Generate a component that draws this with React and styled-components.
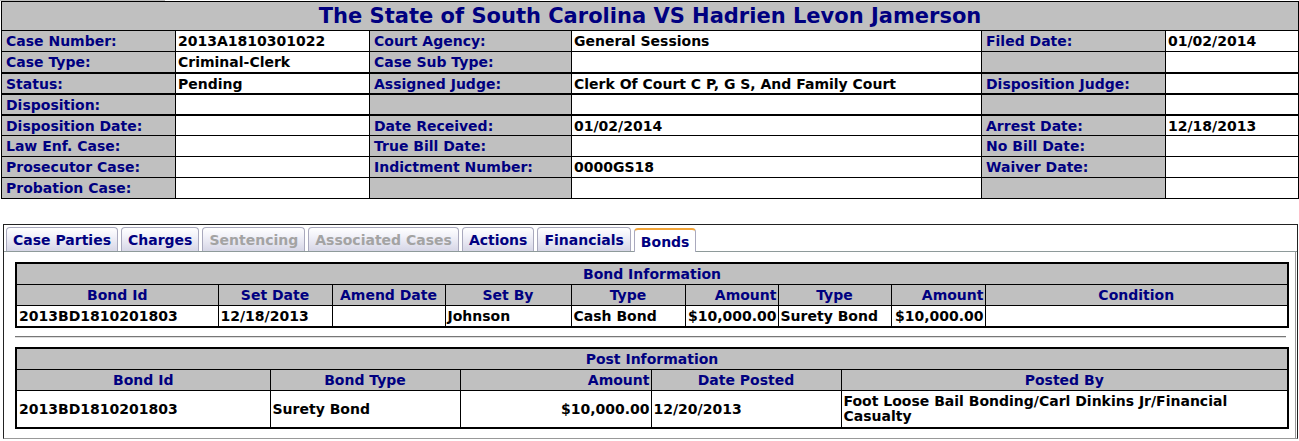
import React from 'react';
import styled, { createGlobalStyle } from 'styled-components';

const GlobalStyle = createGlobalStyle`
  body {
    margin: 0;
    background: #fff;
    font-family: Verdana, "DejaVu Sans", sans-serif;
    font-weight: bold;
  }
`;

const Page = styled.div`
  width: 1299px;
`;

const TopStrip = styled.div`
  width: 165px;
  height: 1px;
  background: #c0c0c0;
`;

const CaseTable = styled.table`
  border-collapse: collapse;
  table-layout: fixed;
  width: 1297px;
  margin-left: 1px;
  border: 1px solid #000;
`;

const Title = styled.th`
  height: 28px;
  padding: 0;
  background: #c0c0c0;
  color: #000080;
  font-size: 21px;
  text-align: center;
  border: 1px solid #000;
`;

const Row = styled.tr`
  & > td {
    border-top: ${(p) => (p.$thick ? '2px' : '1px')} solid #000;
    height: ${(p) => (p.$thick ? '19px' : '20px')};
  }
`;

const Label = styled.td`
  padding: 0 3px 0 4px;
  background: #c0c0c0;
  color: #000080;
  font-size: 14px;
  line-height: 16px;
  white-space: nowrap;
  overflow: hidden;
  border: 1px solid #000;
`;

const Value = styled(Label)`
  padding: 0 3px 0 2px;
  background: #fff;
  color: #000;
`;

const Panel = styled.div`
  margin: 25px 0 0 3px;
  width: 1293px;
  border: 1px solid #222;
  border-bottom-color: #999;
  padding: 1px 0 0;
`;

const TabBar = styled.div`
  display: flex;
  gap: 3px;
  padding-left: 2px;
  border-bottom: 1px solid #8e9a9a;
  height: 25px;
  align-items: flex-end;
`;

const Tab = styled.div`
  height: 24px;
  line-height: 25px;
  box-sizing: border-box;
  padding: 0 6px;
  margin-bottom: ${(p) => (p.$active ? '-1px' : '0')};
  font-size: 14px;
  color: ${(p) => (p.$disabled ? '#a3a3a3' : '#000080')};
  border: 1px solid #a9a9bd;
  border-bottom: none;
  border-top: ${(p) => (p.$active ? '2px solid #f2a437' : '1px solid #a9a9bd')};
  border-radius: 4px 4px 0 0;
  background: ${(p) =>
    p.$active ? '#fff' : 'linear-gradient(#ffffff 0%, #f0f0f8 40%, #d6d6e6 100%)'};
  white-space: nowrap;
`;

const Content = styled.div`
  padding: 10px 9px 9px 11px;
  border-right: 1px solid #999;
  margin-right: 1px;
`;

const Grid = styled.table`
  border-collapse: collapse;
  table-layout: fixed;
  width: 1272px;
  border: 2px solid #000;
`;

const Caption = styled.th`
  height: 20px;
  padding: 0;
  background: #c0c0c0;
  color: #000080;
  font-size: 14px;
  line-height: 16px;
  text-align: center;
  border: 1px solid #000;
`;

const Head = styled.th`
  height: 20px;
  padding: 0 1px;
  background: #c0c0c0;
  color: #000080;
  font-size: 14px;
  line-height: 16px;
  text-align: ${(p) => p.$align || 'center'};
  border: 1px solid #000;
  white-space: nowrap;
`;

const Cell = styled.td`
  height: ${(p) => p.$h || '20px'};
  padding: 0 1px 0 2px;
  color: #000;
  font-size: 14px;
  line-height: 15px;
  text-align: ${(p) => p.$align || 'left'};
  border: 1px solid #000;
  white-space: ${(p) => (p.$wrap ? 'normal' : 'nowrap')};
`;

const Rule = styled.hr`
  margin: 8px 0 9px;
  border: 0;
  border-top: 1px solid #777;
  border-bottom: 1px solid #ddd;
`;

const caseRows = [
  ['Case Number:', '2013A1810301022', 'Court Agency:', 'General Sessions', 'Filed Date:', '01/02/2014'],
  ['Case Type:', 'Criminal-Clerk', 'Case Sub Type:', '', '', ''],
  ['Status:', 'Pending', 'Assigned Judge:', 'Clerk Of Court C P, G S, And Family Court', 'Disposition Judge:', '', true],
  ['Disposition:', '', '', '', '', '', true],
  ['Disposition Date:', '', 'Date Received:', '01/02/2014', 'Arrest Date:', '12/18/2013', true],
  ['Law Enf. Case:', '', 'True Bill Date:', '', 'No Bill Date:', ''],
  ['Prosecutor Case:', '', 'Indictment Number:', '0000GS18', 'Waiver Date:', ''],
  ['Probation Case:', '', '', '', '', ''],
];

const tabs = [
  { name: 'Case Parties' },
  { name: 'Charges' },
  { name: 'Sentencing', disabled: true },
  { name: 'Associated Cases', disabled: true },
  { name: 'Actions' },
  { name: 'Financials' },
  { name: 'Bonds', active: true },
];

const bondCols = [
  ['Bond Id', 202], ['Set Date', 114], ['Amend Date', 113], ['Set By', 126], ['Type', 114],
  ['Amount', 93, 'right'], ['Type', 113], ['Amount', 94, 'right'], ['Condition', 303],
];
const bondRow = ['2013BD1810201803', '12/18/2013', '', 'Johnson', 'Cash Bond', '$10,000.00', 'Surety Bond', '$10,000.00', ''];

const postCols = [
  ['Bond Id', 254], ['Bond Type', 190], ['Amount', 191, 'right'], ['Date Posted', 190], ['Posted By', 447],
];
const postRow = ['2013BD1810201803', 'Surety Bond', '$10,000.00', '12/20/2013', 'Foot Loose Bail Bonding/Carl Dinkins Jr/Financial Casualty'];

function InfoGrid({ title, cols, row, rowHeight }) {
  return (
    <Grid>
      <colgroup>
        {cols.map(([, w], i) => (
          <col key={i} style={{ width: w }} />
        ))}
      </colgroup>
      <thead>
        <tr>
          <Caption colSpan={cols.length}>{title}</Caption>
        </tr>
        <tr>
          {cols.map(([name, , align], i) => (
            <Head key={i} $align={align}>{name}</Head>
          ))}
        </tr>
      </thead>
      <tbody>
        <tr>
          {row.map((v, i) => (
            <Cell key={i} $align={cols[i][2]} $h={rowHeight} $wrap={!!rowHeight}>
              {v}
            </Cell>
          ))}
        </tr>
      </tbody>
    </Grid>
  );
}

export default function App() {
  return (
    <Page>
      <GlobalStyle />
      <TopStrip />
      <CaseTable>
        <colgroup>
          <col style={{ width: 174 }} />
          <col style={{ width: 194 }} />
          <col style={{ width: 202 }} />
          <col style={{ width: 410 }} />
          <col style={{ width: 184 }} />
          <col style={{ width: 133 }} />
        </colgroup>
        <thead>
          <tr>
            <Title colSpan={6}>The State of South Carolina VS Hadrien Levon Jamerson</Title>
          </tr>
        </thead>
        <tbody>
          {caseRows.map((r, i) => (
            <Row key={i} $thick={r[6]}>
              <Label>{r[0]}</Label>
              <Value>{r[1]}</Value>
              <Label>{r[2]}</Label>
              <Value>{r[3]}</Value>
              <Label>{r[4]}</Label>
              <Value>{r[5]}</Value>
            </Row>
          ))}
        </tbody>
      </CaseTable>

      <Panel>
        <TabBar>
          {tabs.map((t) => (
            <Tab key={t.name} $active={t.active} $disabled={t.disabled}>
              {t.name}
            </Tab>
          ))}
        </TabBar>
        <Content>
          <InfoGrid title="Bond Information" cols={bondCols} row={bondRow} />
          <Rule />
          <InfoGrid title="Post Information" cols={postCols} row={postRow} rowHeight="36px" />
        </Content>
      </Panel>
    </Page>
  );
}
